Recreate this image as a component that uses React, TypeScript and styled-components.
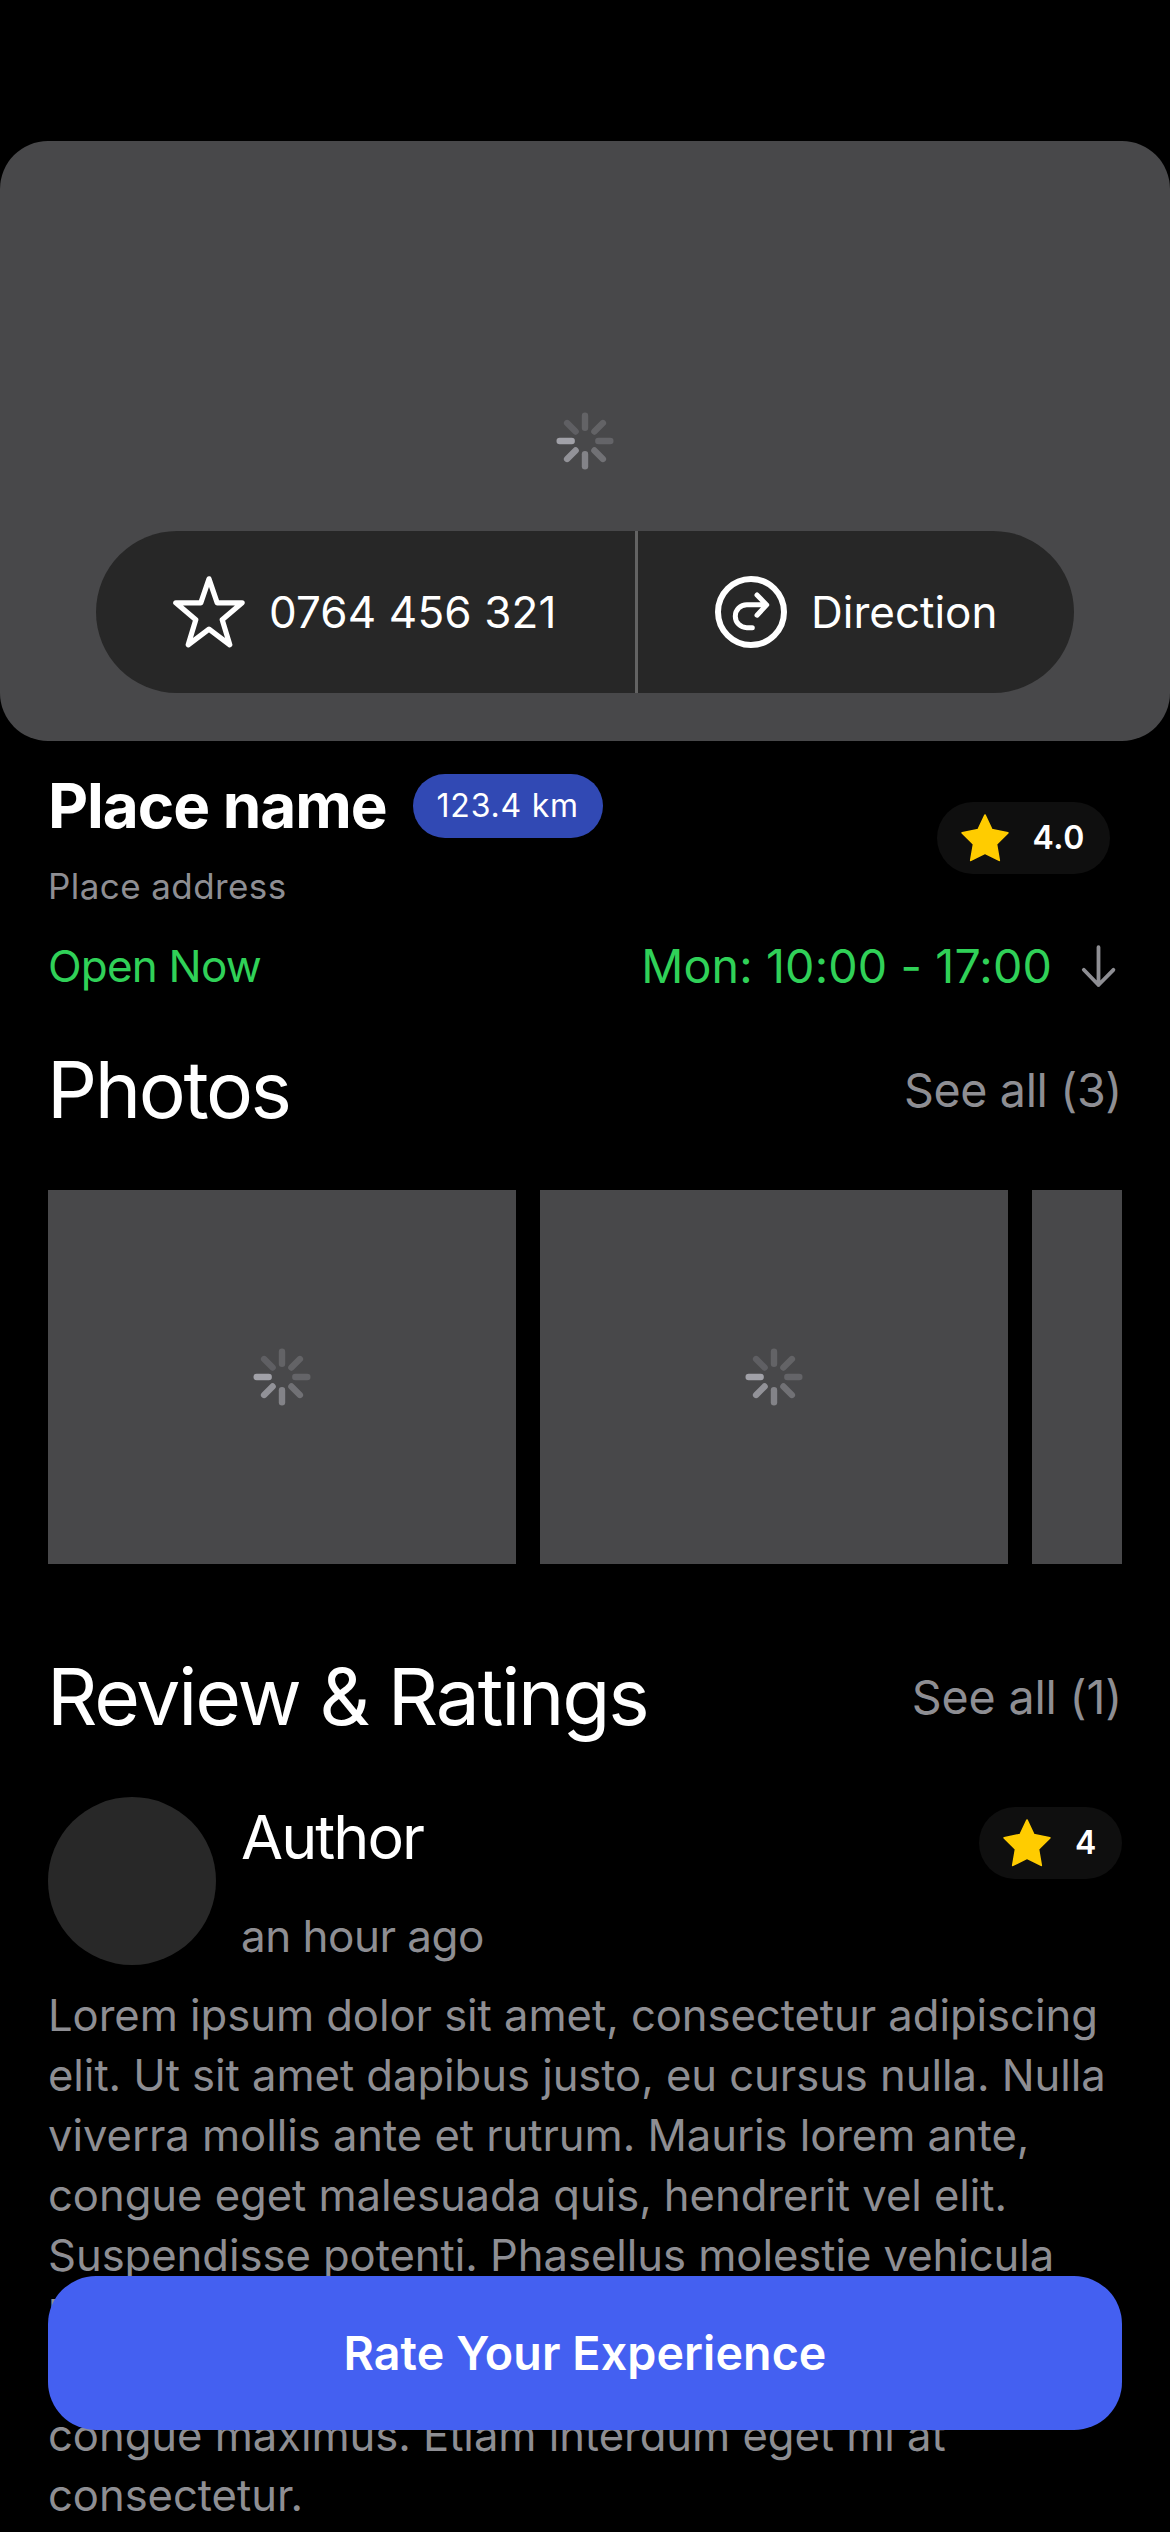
import React from 'react';
import styled, { createGlobalStyle } from 'styled-components';

const colors = {
  background: '#000000',
  placeholder: '#48484a',
  surface: '#272727',
  badge: '#0f0f0f',
  muted: '#8e8e93',
  green: '#30d158',
  star: '#ffcc00',
  primary: '#4460f1',
  distance: '#3149b4',
};

const GlobalStyle = createGlobalStyle`
  * { box-sizing: border-box; }
  html, body { margin: 0; background: ${colors.background}; }
  body { overflow: hidden; }
`;

const Screen = styled.main`
  display: flex;
  flex-direction: column;
  width: 1170px;
  height: 2532px;
  padding-top: 141px;
  overflow: hidden;
  background: ${colors.background};
  color: #ffffff;
  font-family: Inter, 'Liberation Sans', sans-serif;
`;

const Text = styled.span<{
  $size: number;
  $line?: number;
  $spacing?: number;
  $weight?: number;
  $color?: string;
}>`
  margin: 0;
  font-size: ${(p) => p.$size}px;
  line-height: ${(p) => p.$line ?? 60}px;
  letter-spacing: ${(p) => p.$spacing ?? 0}px;
  font-weight: ${(p) => p.$weight ?? 400};
  color: ${(p) => p.$color ?? '#ffffff'};
  white-space: nowrap;
`;

const Hero = styled.header`
  display: grid;
  flex: none;
  height: 600px;
  border-radius: 48px;
  background: ${colors.placeholder};

  > * {
    grid-area: 1 / 1;
    justify-self: center;
  }
  > svg {
    align-self: center;
  }
`;

const ActionBar = styled.nav`
  display: flex;
  align-self: end;
  width: 978px;
  height: 162px;
  margin-bottom: 48px;
  border-radius: 81px;
  background: ${colors.surface};
`;

const Action = styled.button<{ $width: number }>`
  display: flex;
  align-items: center;
  gap: 24px;
  width: ${(p) => p.$width}px;
  padding: 0 0 0 77px;
  border: 0;
  background: none;
  font-family: inherit;
`;

const ActionDivider = styled.div`
  width: 3px;
  background: #636363;
`;

const Content = styled.div`
  display: flex;
  flex-direction: column;
  flex: none;
  padding: 24px 48px 0;
`;

const PlaceInfo = styled.section`
  display: flex;
  align-items: center;
  justify-content: space-between;
  height: 146px;
  padding-right: 12px;
`;

const PlaceDetails = styled.div`
  display: flex;
  flex-direction: column;
  gap: 18px;
  height: 146px;
`;

const NameRow = styled.div`
  display: flex;
  align-items: center;
  gap: 26px;
  height: 82px;
`;

const DistancePill = styled.div`
  display: flex;
  align-items: center;
  height: 64px;
  padding: 0 24px;
  border-radius: 32px;
  background: ${colors.distance};
`;

const RatingPill = styled.div`
  display: flex;
  align-items: center;
  flex: none;
  gap: 24px;
  height: 72px;
  padding: 0 25px 0 24px;
  border-radius: 36px;
  background: ${colors.badge};
`;

const HoursRow = styled.section`
  display: flex;
  align-items: center;
  justify-content: space-between;
  height: 60px;
  margin-top: 25px;
`;

const Hours = styled.div`
  display: flex;
  align-items: center;
  gap: 22px;
`;

const SectionHeader = styled.header<{ $top: number }>`
  display: flex;
  align-items: center;
  justify-content: space-between;
  height: 100px;
  margin-top: ${(p) => p.$top}px;
`;

const SectionTitle = styled(Text)`
  margin-left: -1px;
`;

const PhotoStrip = styled.div`
  display: flex;
  gap: 24px;
  margin-top: 50px;
  overflow: hidden;
`;

const Photo = styled.div`
  display: flex;
  align-items: center;
  justify-content: center;
  flex: none;
  width: 468px;
  height: 374px;
  background: ${colors.placeholder};
`;

const ReviewHeader = styled.div`
  display: flex;
  gap: 25px;
  height: 168px;
  margin-top: 50px;

  ${RatingPill} {
    margin: 10px 0 0 auto;
  }
`;

const Avatar = styled.div`
  width: 168px;
  height: 168px;
  border-radius: 50%;
  background: #282828;
`;

const AuthorDetails = styled.div`
  display: flex;
  flex-direction: column;
  gap: 29px;
`;

const ReviewText = styled.p`
  margin: 21px 0 0;
  font-size: 43.6px;
  line-height: 60px;
  letter-spacing: -0.05px;
  color: ${colors.muted};
  white-space: pre;
`;

const RateButton = styled.button`
  position: absolute;
  top: 2276px;
  left: 48px;
  display: flex;
  align-items: center;
  justify-content: center;
  width: 1074px;
  height: 154px;
  padding: 0;
  border: 0;
  border-radius: 48px;
  background: ${colors.primary};
  font-family: inherit;
`;

const spokes = ['#636366', '#636366', '#646468', '#717175', '#838388', '#929298', '#a1a1a8', '#5f5f63'];

const Spinner = () => (
  <svg width="60" height="60" viewBox="-30 -30 60 60">
    {spokes.map((fill, i) => (
      <rect key={i} x="-3.2" y="-28.5" width="6.4" height="18.4" rx="3.2" fill={fill} transform={`rotate(${i * 45})`} />
    ))}
  </svg>
);

const StarOutline = () => (
  <svg width="72" height="72" viewBox="0 0 72 72" fill="none" stroke="#fff" strokeWidth="5.2" strokeLinejoin="round">
    <path d="M36 2.8L44.2 26.8H69.2L49.2 43.7L56.8 68.8L36 53.2L15.2 68.8L22.8 43.7L2.8 26.8H27.8Z" />
  </svg>
);

const DirectionIcon = () => (
  <svg width="72" height="72" viewBox="0 0 72 72" fill="none" stroke="#fff" strokeLinecap="round" strokeLinejoin="round">
    <circle cx="36" cy="36" r="33" strokeWidth="6" />
    <path d="M37.3 51.7H31.8A11.5 11.5 0 0 1 31.8 28.7H51.5M42 19L51.7 28.9L42 39.2" strokeWidth="5" />
  </svg>
);

const StarFilled = () => (
  <svg width="48" height="48" viewBox="0 0 48 48" fill={colors.star} stroke={colors.star} strokeWidth="1.8" strokeLinejoin="round">
    <path d="M24 1.1L30.8 15.6L46.8 18.8L35.4 30.1L38.2 46.3L24 39.1L9.8 46.3L12.6 30.1L1.2 18.8L17.2 15.6Z" />
  </svg>
);

const ArrowDown = () => (
  <svg width="48" height="48" viewBox="0 0 48 48" fill="none" stroke={colors.muted} strokeWidth="3.8" strokeLinecap="round" strokeLinejoin="round">
    <path d="M24.5 5.2V43M9.8 27.8L24.5 43L39.4 27.8" />
  </svg>
);

const Rating = ({ value }: { value: string }) => (
  <RatingPill>
    <StarFilled />
    <Text $size={32} $weight={600} $spacing={0.6}>{value}</Text>
  </RatingPill>
);

const review = [
  'Lorem ipsum dolor sit amet, consectetur adipiscing',
  'elit. Ut sit amet dapibus justo, eu cursus nulla. Nulla',
  'viverra mollis ante et rutrum. Mauris lorem ante,',
  'congue eget malesuada quis, hendrerit vel elit.',
  'Suspendisse potenti. Phasellus molestie vehicula',
  'leo, sit amet pretium nisl feugiat nec. Sed',
  'vitae lorem ac nunc cursus ornare in vel',
  'congue maximus. Etiam interdum eget mi at',
  'consectetur.',
].join('\n');

export default function App() {
  return (
    <Screen>
      <GlobalStyle />
      <Hero>
        <Spinner />
        <ActionBar>
          <Action $width={539}>
            <StarOutline />
            <Text $size={44} $spacing={0.13}>0764 456 321</Text>
          </Action>
          <ActionDivider />
          <Action $width={436}>
            <DirectionIcon />
            <Text $size={44}>Direction</Text>
          </Action>
        </ActionBar>
      </Hero>

      <Content>
        <PlaceInfo>
          <PlaceDetails>
            <NameRow>
              <Text as="h1" $size={62} $line={82} $weight={700} $spacing={-1.06}>Place name</Text>
              <DistancePill>
                <Text $size={32} $spacing={0.77}>123.4 km</Text>
              </DistancePill>
            </NameRow>
            <Text $size={35} $line={42} $spacing={0.42} $color={colors.muted}>Place address</Text>
          </PlaceDetails>
          <Rating value="4.0" />
        </PlaceInfo>

        <HoursRow>
          <Text $size={44} $spacing={-0.8} $color={colors.green}>Open Now</Text>
          <Hours>
            <Text $size={46.6} $spacing={0.14} $color={colors.green}>Mon: 10:00 - 17:00</Text>
            <ArrowDown />
          </Hours>
        </HoursRow>

        <SectionHeader $top={44}>
          <SectionTitle as="h2" $size={78.5} $line={100} $spacing={-2.4}>Photos</SectionTitle>
          <Text $size={46.6} $spacing={-0.35} $color={colors.muted}>See all (3)</Text>
        </SectionHeader>
        <PhotoStrip>
          <Photo><Spinner /></Photo>
          <Photo><Spinner /></Photo>
          <Photo><Spinner /></Photo>
        </PhotoStrip>

        <SectionHeader $top={83}>
          <SectionTitle as="h2" $size={78.5} $line={100} $spacing={-2.14}>Review &amp; Ratings</SectionTitle>
          <Text $size={46.6} $spacing={-0.18} $color={colors.muted}>See all (1)</Text>
        </SectionHeader>
        <ReviewHeader>
          <Avatar />
          <AuthorDetails>
            <Text $size={61} $line={80} $spacing={-1.95}>Author</Text>
            <Text $size={44} $spacing={-0.51} $color={colors.muted}>an hour ago</Text>
          </AuthorDetails>
          <Rating value="4" />
        </ReviewHeader>
        <ReviewText>{review}</ReviewText>
      </Content>

      <RateButton>
        <Text $size={46.6} $weight={600} $spacing={0.09}>Rate Your Experience</Text>
      </RateButton>
    </Screen>
  );
}
